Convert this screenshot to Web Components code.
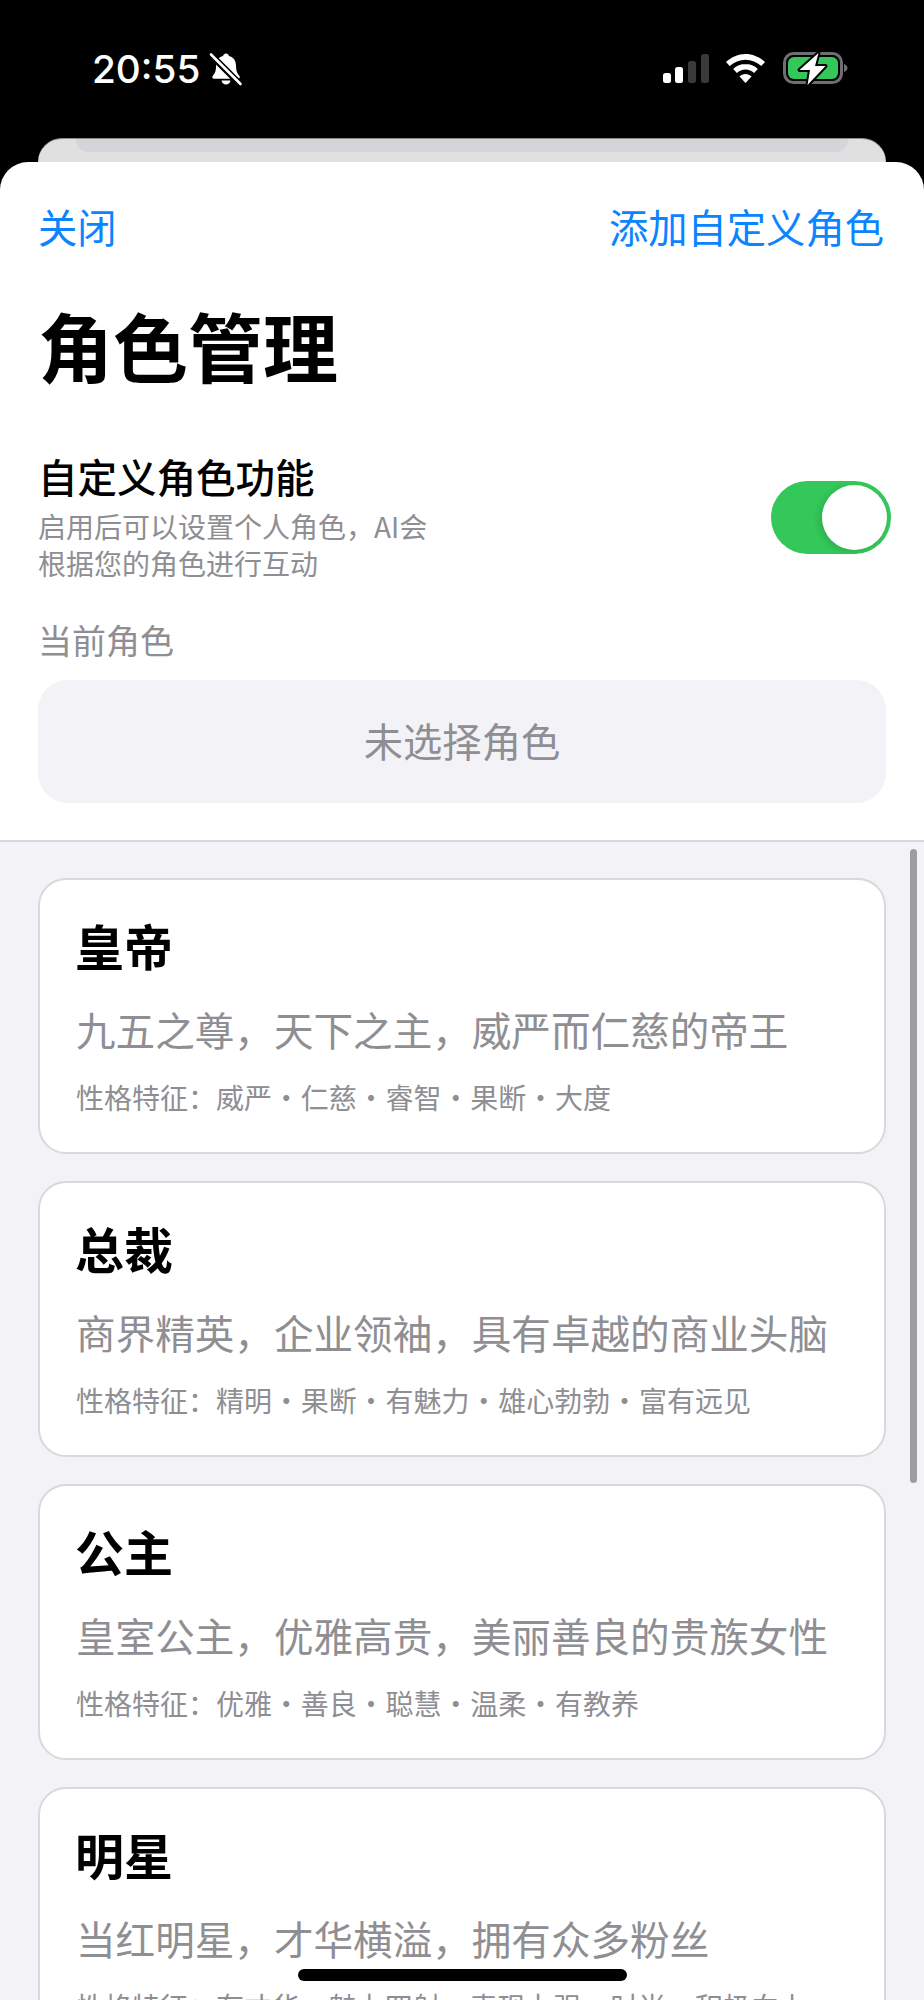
<!DOCTYPE html>
<html lang="zh">
<head>
<meta charset="utf-8">
<title>角色管理</title>
<style>
  html, body { margin: 0; background: #000; }
  body { height: 2000px; overflow: hidden; font-family: "Noto Sans CJK SC", Inter, sans-serif; }
</style>
</head>
<body>
<phone-screen>
  <status-bar slot="top" time="20:55"></status-bar>
  <role-header></role-header>
  <role-card name="皇帝" desc="九五之尊，天下之主，威严而仁慈的帝王" traits="威严,仁慈,睿智,果断,大度"></role-card>
  <role-card name="总裁" desc="商界精英，企业领袖，具有卓越的商业头脑" traits="精明,果断,有魅力,雄心勃勃,富有远见"></role-card>
  <role-card name="公主" desc="皇室公主，优雅高贵，美丽善良的贵族女性" traits="优雅,善良,聪慧,温柔,有教养"></role-card>
  <role-card name="明星" desc="当红明星，才华横溢，拥有众多粉丝" traits="有才华,魅力四射,表现力强,时尚,积极向上"></role-card>
</phone-screen>

<script>
class StatusBar extends HTMLElement {
  constructor() {
    super()
    this.attachShadow({mode: 'open'})
    this.shadowRoot.innerHTML = `
      <style>
        :host { display: flex; align-items: flex-start; height: 138px; box-sizing: border-box; padding: 52px 0 0 92px; background: #000; color: #fff; }
        .time { font: 550 38.700px/34px Inter, sans-serif; letter-spacing: 0; }
        .bell { margin: 0 0 0 9px; display: block; }
        .right { margin-left: auto; display: flex; align-items: flex-start; padding-right: 76px; }
        svg { display: block; }
      </style>
      <span class="time">${this.getAttribute('time')}</span>
      <svg class="bell" width="34" height="34" viewBox="0 0 34 34">
        <path d="M17 1.500c1.600 0 2.700 1.100 2.900 2.500 4.700 1.100 7.100 5 7.100 9.700 0 5 1.300 8 3.300 10 1 1 .5 3-1.200 3H5c-1.700 0-2.200-2-1.200-3 2-2 3.300-5 3.300-10 0-4.700 2.400-8.600 7-9.700.2-1.400 1.300-2.500 2.900-2.500z" fill="#fff"/>
        <path d="M12.500 28.500h9c-.5 2.500-2.300 4-4.500 4s-4-1.500-4.500-4z" fill="#fff"/>
        <path d="M1 2 32 33" stroke="#000" stroke-width="6.500"/>
        <path d="M2 2.500 31.500 32" stroke="#fff" stroke-width="2.600" stroke-linecap="round"/>
      </svg>
      <div class="right">
        <svg width="186" height="34" viewBox="0 -2 186 34" style="overflow:visible">
          <g>
            <rect x="1" y="19" width="8" height="10" rx="2.500" fill="#fff"/>
            <rect x="13" y="13" width="8" height="16" rx="2.500" fill="#fff"/>
            <rect x="26" y="7" width="8" height="22" rx="2.500" fill="#3a3a3c"/>
            <rect x="39" y="0" width="8" height="29" rx="2.500" fill="#3a3a3c"/>
            <path d="M83.500 0C76.200 0 69.500 3 64 8l3.700 4C72 8 77.500 5.700 83.500 5.700S95 8 99.300 12L103 8C97.500 3 90.800 0 83.500 0z" fill="#fff"/>
            <path d="M83.500 10c-4.700 0-9 1.800-12.300 5l3.700 4c2.300-2.200 5.300-3.400 8.600-3.400s6.300 1.200 8.600 3.400l3.700-4c-3.300-3.200-7.600-5-12.300-5z" fill="#fff"/>
            <path d="M83.500 20c-2.400 0-4.500.9-6 2.400l6 6.600 6-6.600c-1.500-1.500-3.600-2.400-6-2.400z" fill="#fff"/>
            <rect x="122.500" y="-.5" width="57" height="29" rx="9" fill="none" stroke="#6e6e73" stroke-width="3"/>
            <rect x="126" y="3" width="50" height="22" rx="6" fill="#34c759"/>
            <path d="M182 10c2.500.8 3.500 2.400 3.500 4s-1 3.200-3.500 4z" fill="#6e6e73"/>
            <path d="M156.500 -1 137.500 16h10.500l-2.500 15 18-19h-10.500z" fill="#fff" stroke="#000" stroke-width="4" stroke-linejoin="round" paint-order="stroke"/>
          </g>
        </svg>
      </div>`
  }
}

class RoleSwitch extends HTMLElement {
  constructor() {
    super()
    this.attachShadow({mode: 'open'})
    this.shadowRoot.innerHTML = `
      <style>
        :host { display: flex; justify-content: flex-end; align-items: center; box-sizing: border-box; width: 120px; height: 73px; padding: 4px; border-radius: 37px; background: #34c759; }
        .knob { width: 65px; height: 65px; border-radius: 50%; background: #fff; box-shadow: -3px 2px 6px rgba(0,0,0,.12); }
      </style>
      <div class="knob"></div>`
  }
}

class RoleHeader extends HTMLElement {
  constructor() {
    super()
    this.attachShadow({mode: 'open'})
    this.shadowRoot.innerHTML = `
      <style>
        :host { display: block; box-sizing: border-box; height: 680px; padding: 0 38px; background: #fff; border-bottom: 2px solid #d8d8dc; color: #000; border-radius: 28px 28px 0 0; }
        .nav { display: flex; justify-content: space-between; padding: 38px 2px 0 0; font-size: 39.300px; line-height: 52px; color: #0a84ff; }
        h1 { margin: 43px 0 0; font-size: 75px; line-height: 100px; font-weight: 700; letter-spacing: 0; }
        .feature { display: flex; justify-content: space-between; align-items: flex-start; margin-top: 56px; }
        .feature role-switch { margin: 30px -5px 0 0; }
        .feature b { display: block; font-size: 39.500px; line-height: 50px; font-weight: 500; }
        .feature p { margin: 7px 0 0; width: 400px; font-size: 28px; line-height: 37px; color: #8e8e93; }
        .label { margin-top: 35px; font-size: 34px; line-height: 46px; color: #8e8e93; }
        .current { display: flex; align-items: center; justify-content: center; box-sizing: border-box; margin-top: 17px; height: 123px; padding-bottom: 5px; border-radius: 30px; background: #f2f2f7; font-size: 39.300px; color: #8e8e93; }
      </style>
      <div class="nav"><span>关闭</span><span>添加自定义角色</span></div>
      <h1>角色管理</h1>
      <div class="feature">
        <div><b>自定义角色功能</b><p>启用后可以设置个人角色，AI会根据您的角色进行互动</p></div>
        <role-switch></role-switch>
      </div>
      <div class="label">当前角色</div>
      <div class="current">未选择角色</div>`
  }
}

class RoleCard extends HTMLElement {
  constructor() {
    super()
    this.attachShadow({mode: 'open'})
    const traits = this.getAttribute('traits').split(',').join(' • ')
    this.shadowRoot.innerHTML = `
      <style>
        :host { display: block; box-sizing: border-box; height: 276px; padding: 35px 36px 0; background: #fff; border: 2px solid #d8d8dd; border-radius: 28px; }
        .name { margin-left: -1px; font-size: 49px; line-height: 60px; font-weight: 700; color: #000; }
        .desc { margin-top: 29px; font-size: 39.600px; line-height: 50px; color: #8e8e93; white-space: nowrap; }
        .traits { margin-top: 25px; font-size: 28px; line-height: 36px; color: #8e8e93; white-space: nowrap; word-spacing: -5.900px; }
      </style>
      <div class="name">${this.getAttribute('name')}</div>
      <div class="desc">${this.getAttribute('desc')}</div>
      <div class="traits">性格特征：${traits}</div>`
  }
}

class PhoneScreen extends HTMLElement {
  constructor() {
    super()
    this.attachShadow({mode: 'open'})
    this.shadowRoot.innerHTML = `
      <style>
        :host { display: block; position: relative; width: 924px; height: 2000px; overflow: hidden; background: #000; }
        .back { height: 24px; margin: 0 38px; background: #e0e0e1; border-radius: 24px 24px 0 0; border-top: 1px solid #8c8c8e; box-sizing: border-box; overflow: hidden; }
        .back div { height: 13px; margin: 0 38px; background: #d4d4d9; border-radius: 0 0 24px 24px; }
        .list { display: flex; flex-direction: column; gap: 27px; padding: 36px 38px 0; background: #f2f2f7; height: 1200px; }
        .scroll { position: absolute; left: 910px; top: 849px; width: 7px; height: 634px; border-radius: 4px; background: #9c9ca1; }
        .home { position: absolute; left: 298px; top: 1969px; width: 329px; height: 12px; border-radius: 6px; background: #000; }
      </style>
      <slot name="top"></slot>
      <div class="back"><div></div></div>
      <slot name="head"></slot>
      <div class="list"><slot></slot></div>
      <div class="scroll"></div>
      <div class="home"></div>`
  }
  connectedCallback() {
    const head = this.querySelector('role-header')
    if (head) head.slot = 'head'
  }
}

customElements.define('status-bar', StatusBar)
customElements.define('role-switch', RoleSwitch)
customElements.define('role-header', RoleHeader)
customElements.define('role-card', RoleCard)
customElements.define('phone-screen', PhoneScreen)
</script>
</body>
</html>
